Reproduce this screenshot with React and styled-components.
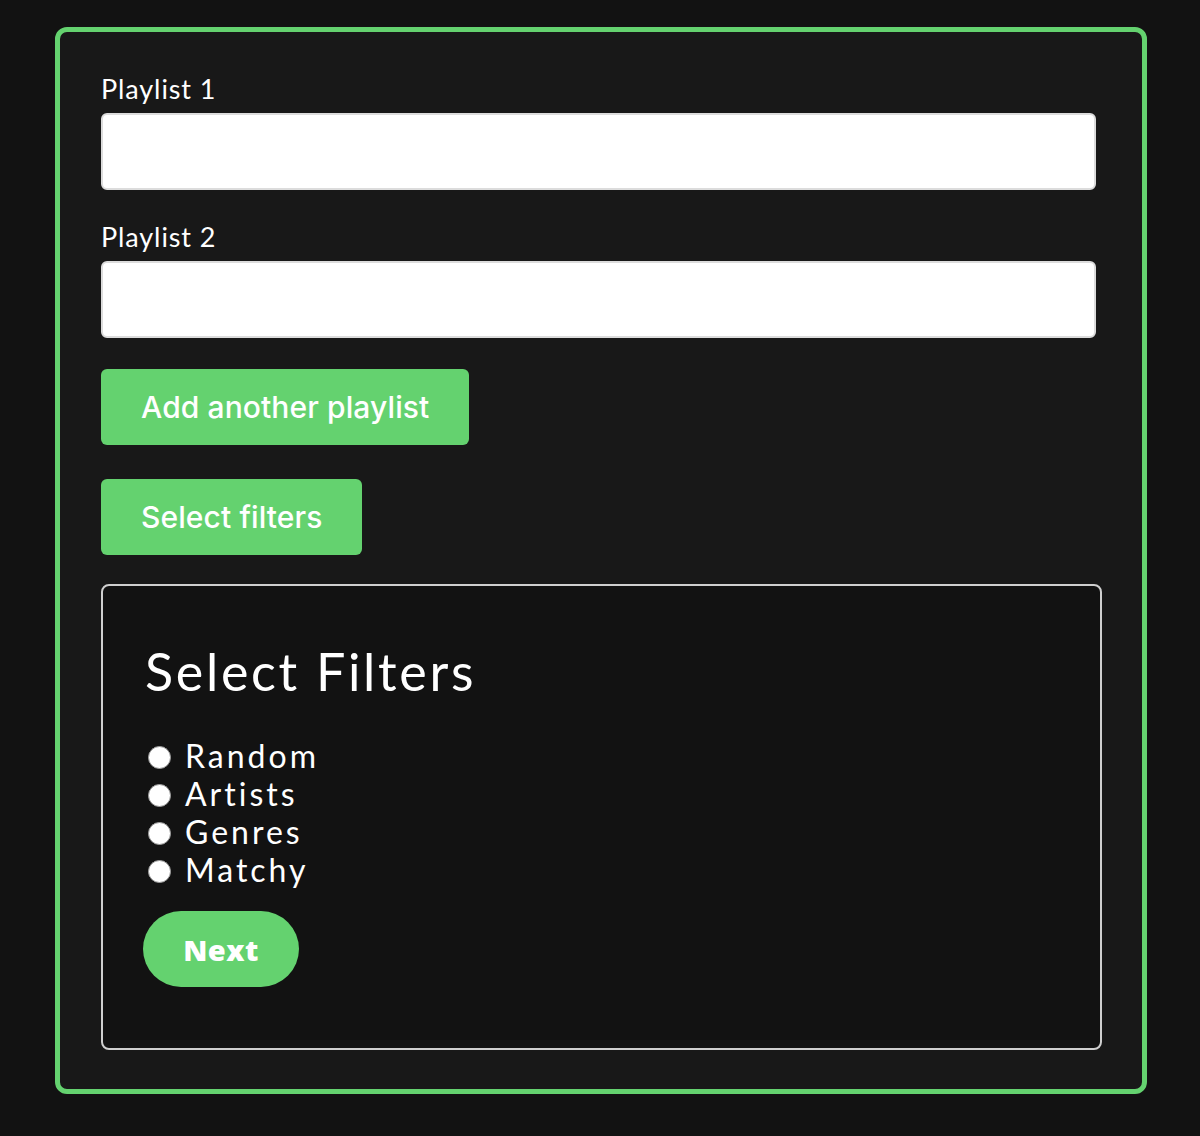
import React from "react";
import styled, { createGlobalStyle } from "styled-components";

const Global = createGlobalStyle`
  html, body { margin: 0; padding: 0; background: #121212; }
  body { font-family: Lato, "Noto Sans", sans-serif; color: #fff; }
  * { box-sizing: border-box; }
`;

const Page = styled.div`
  padding: 27px 53px 43px 55px;
`;

const Panel = styled.form`
  background: #181818;
  border: 5px solid #64d26f;
  border-radius: 12px;
  padding: 42px 46px 39px 41px;
  display: flex;
  flex-direction: column;
`;

const Field = styled.div`
  display: flex;
  flex-direction: column;
  margin-bottom: ${(p) => p.$mb}px;
`;

const Label = styled.label`
  font-family: Lato, "Noto Sans", sans-serif;
  font-size: 27px;
  line-height: 30px;
  letter-spacing: 0.9px;
  margin-bottom: 9px;
  color: #fff;
`;

const TextInput = styled.input`
  height: 77px;
  width: 100%;
  background: #fff;
  border: 2px solid #dcdcdc;
  border-radius: 6px;
  font-size: 20px;
  padding: 0 16px;
`;

const GreenButton = styled.button`
  align-self: flex-start;
  height: 76px;
  padding: 0 40px;
  background: #64d26f;
  color: #fff;
  border: none;
  border-radius: 6px;
  font-family: Inter, "Noto Sans", sans-serif;
  font-size: 30px;
  font-weight: 500;
  letter-spacing: 0.1px;
  margin-bottom: ${(p) => p.$mb}px;
  cursor: pointer;
`;

const FilterBox = styled.div`
  background: #121212;
  border: 2px solid #cfcfcf;
  border-radius: 8px;
  padding: 57px 40px 61px 40px;
  margin-right: -6px;
  display: flex;
  flex-direction: column;
`;

const Heading = styled.h2`
  margin: 0 0 37px 2px;
  font-family: Lato, "Noto Sans", sans-serif;
  font-weight: 400;
  font-size: 52px;
  line-height: 56px;
  letter-spacing: 2.7px;
`;

const Options = styled.div`
  display: flex;
  flex-direction: column;
  margin-bottom: 23px;
`;

const Option = styled.label`
  display: flex;
  align-items: center;
  height: 38px;
  font-family: Lato, "Noto Sans", sans-serif;
  font-size: 32px;
  letter-spacing: 3px;
  padding-left: 5px;
`;

const Radio = styled.input`
  appearance: none;
  width: 23px;
  height: 23px;
  border-radius: 50%;
  background: #fff;
  border: 1px solid #9a9a9a;
  margin: 4px 14px 0 0;
`;

const NextButton = styled.button`
  align-self: flex-start;
  width: 156px;
  height: 76px;
  background: #64d26f;
  color: #fff;
  border: none;
  border-radius: 38px;
  font-family: "Open Sans", "Noto Sans", sans-serif;
  font-weight: 800;
  font-size: 29px;
  letter-spacing: 0.5px;
  cursor: pointer;
`;

const options = ["Random", "Artists", "Genres", "Matchy"];

export default function App() {
  return (
    <>
      <Global />
      <Page>
        <Panel onSubmit={(e) => e.preventDefault()}>
          <Field $mb={32}>
            <Label>Playlist 1</Label>
            <TextInput type="text" />
          </Field>
          <Field $mb={31}>
            <Label>Playlist 2</Label>
            <TextInput type="text" />
          </Field>
          <GreenButton type="button" $mb={34}>Add another playlist</GreenButton>
          <GreenButton type="button" $mb={29}>Select filters</GreenButton>
          <FilterBox>
            <Heading>Select Filters</Heading>
            <Options>
              {options.map((o) => (
                <Option key={o}>
                  <Radio type="radio" name="filter" value={o} />
                  {o}
                </Option>
              ))}
            </Options>
            <NextButton type="button">Next</NextButton>
          </FilterBox>
        </Panel>
      </Page>
    </>
  );
}
